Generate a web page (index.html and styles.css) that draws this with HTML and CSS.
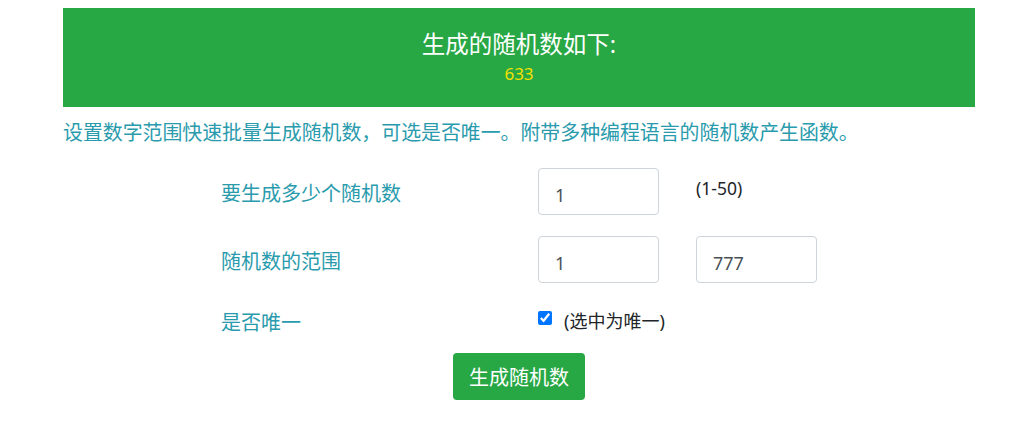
FILE: index.html
```html
<!DOCTYPE html>
<html lang="zh-CN">
<head>
    <meta charset="UTF-8">
    <title>随机数生成器</title>
    <link rel="stylesheet" href="styles.css">
</head>
<body>
    <div class="page">
        <div class="result">
            <h2>生成的随机数如下:</h2>
            <div class="numbers">633</div>
        </div>
        <p class="intro">设置数字范围快速批量生成随机数，可选是否唯一。附带多种编程语言的随机数产生函数。</p>
        <form class="gen-form">
            <label class="lbl">要生成多少个随机数</label>
            <div class="fields">
                <input class="inp" type="text" value="1">
                <span class="hint">(1-50)</span>
            </div>
            <label class="lbl">随机数的范围</label>
            <div class="fields">
                <input class="inp" type="text" value="1">
                <input class="inp" type="text" value="777">
            </div>
            <label class="lbl lbl-check">是否唯一</label>
            <div class="fields check">
                <input type="checkbox" checked>
                <span>(选中为唯一)</span>
            </div>
            <div class="actions">
                <button class="btn" type="button">生成随机数</button>
            </div>
        </form>
    </div>
</body>
</html>
```

FILE: styles.css
```css
body {
    margin: 0;
    font-family: "Noto Sans", "Noto Sans CJK SC", sans-serif;
    background: #fff;
    color: #212529;
}
.page {
    width: 912px;
    margin-left: 63px;
    padding-top: 8px;
}
.result {
    background-color: #28a745;
    height: 99px;
    text-align: center;
    box-sizing: border-box;
    padding-top: 19px;
}
.result h2 {
    margin: 0;
    color: #fff;
    font-size: 23.5px;
    font-weight: normal;
    line-height: 34px;
}
.numbers {
    color: #f3e000;
    font-size: 17px;
    line-height: 26px;
}
.intro {
    margin: 13px 0 0;
    color: #2a9bad;
    font-size: 19.9px;
    line-height: 26px;
}
.gen-form {
    display: grid;
    grid-template-columns: 317px 1fr;
    row-gap: 21px;
    margin-left: 158px;
    margin-top: 22px;
}
.lbl {
    color: #2a9bad;
    font-size: 20px;
    display: flex;
    align-items: center;
    height: 47px;
    padding-top: 2px;
    box-sizing: border-box;
}
.fields {
    display: flex;
    align-items: center;
    gap: 37px;
}
.inp {
    width: 121px;
    height: 47px;
    box-sizing: border-box;
    border: 1px solid #ced4da;
    border-radius: 4px;
    padding: 6px 16px 0;
    font-family: inherit;
    font-size: 18px;
    color: #495057;
}
.hint {
    font-size: 17.5px;
    align-self: flex-start;
    margin-top: 8px;
}
.lbl-check {
    height: 28px;
    padding-top: 6px;
}
.check {
    gap: 0;
    font-size: 18px;
    height: 28px;
}
.check input {
    margin: 0 12px 0 0;
    width: 14px;
    height: 14px;
}
.check span {
    padding-top: 4px;
}
.actions {
    grid-column: 1 / 3;
    margin-left: 74px;
    padding-left: 158px;
}
.btn {
    background-color: #28a745;
    color: #fff;
    border: none;
    border-radius: 4px;
    width: 132px;
    height: 47px;
    font-family: inherit;
    font-size: 20px;
    cursor: pointer;
}
```
